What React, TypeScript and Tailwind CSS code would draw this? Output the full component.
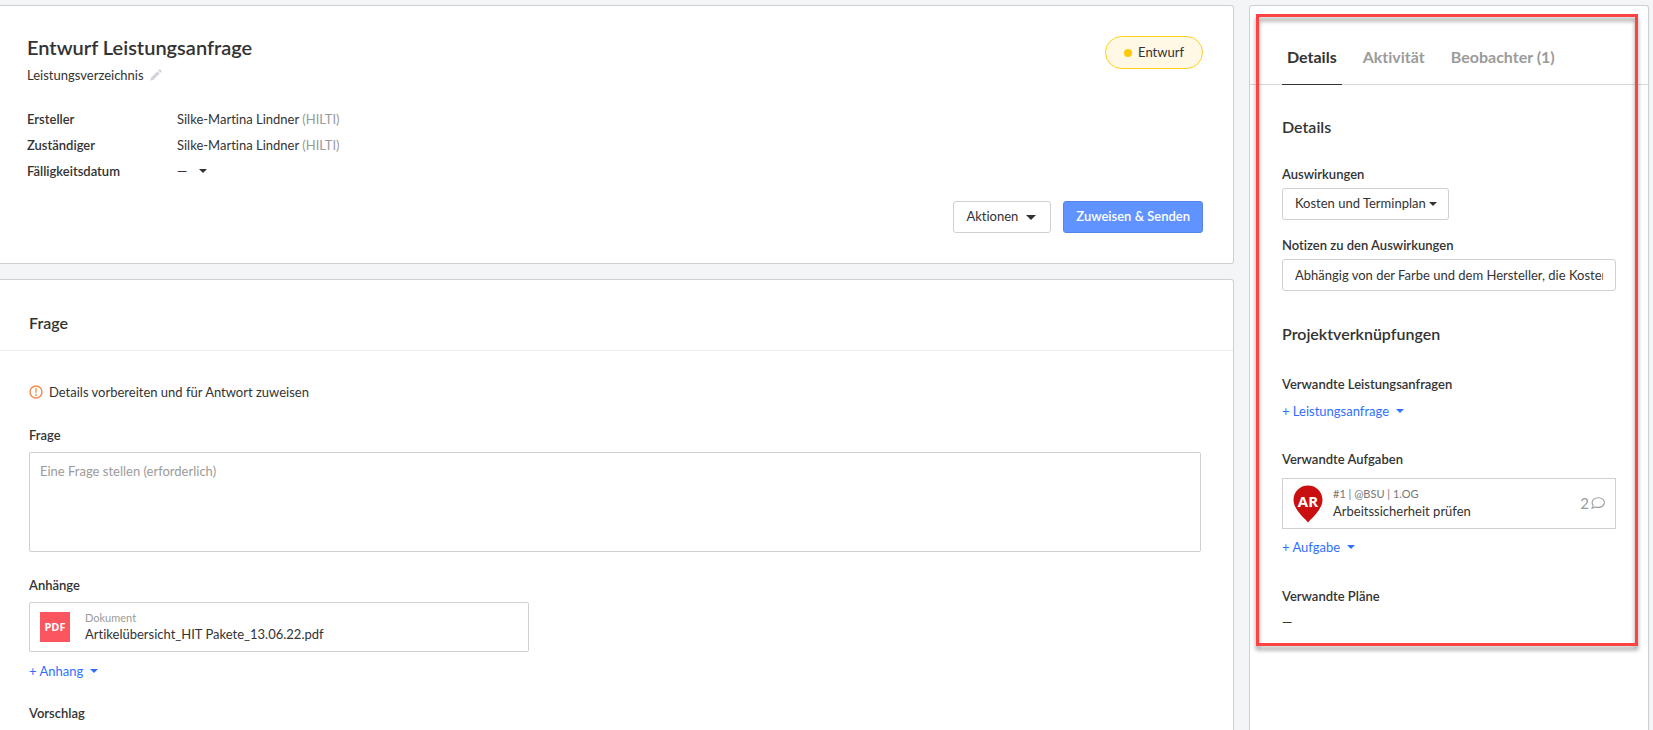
import { useState, type ReactNode } from "react";

function Caret({ className = "w-2 h-1" }: { className?: string }) {
  return (
    <svg viewBox="0 0 8 4" preserveAspectRatio="none" className={className} aria-hidden="true">
      <path d="M0 0h8L4 4z" fill="currentColor" />
    </svg>
  );
}

function PencilIcon() {
  return (
    <svg viewBox="0 0 12 12" className="size-3 text-[#d3d3da]" aria-hidden="true">
      <path d="M0.4 11.6l0.5-2.8 6.6-6.6 2.3 2.3-6.6 6.6zM8.2 1.5l0.9-0.9q0.6-0.5 1.2 0l1.1 1.1q0.5 0.6 0 1.2l-0.9 0.9z" fill="currentColor" />
    </svg>
  );
}

function AlertIcon() {
  return (
    <svg viewBox="0 0 14 14" className="size-3.5 text-[#f58a4b]" aria-hidden="true">
      <circle cx="7" cy="7" r="6" fill="none" stroke="currentColor" strokeWidth="1.4" />
      <path d="M6.2 3.2h1.6l-0.3 5h-1z" fill="currentColor" />
      <circle cx="7" cy="10" r="0.9" fill="currentColor" />
    </svg>
  );
}

function CommentIcon() {
  return (
    <svg viewBox="0 0 14 14" className="size-3.5" fill="none" stroke="currentColor" strokeWidth="1.1" strokeLinejoin="round" aria-hidden="true">
      <path d="M7.3 0.8c3.4 0 6.1 2.100 6.100 4.800s-2.700 4.800-6.100 4.800c-1 0-2-0.200-2.900-0.500-0.900 0.800-2 1.300-3.600 1.300 0.800-0.800 1.300-1.700 1.400-2.700C1.500 7.600 1.100 6.600 1.100 5.600 1.100 2.900 3.900 0.800 7.300 0.800z" />
    </svg>
  );
}

function TaskPin() {
  return (
    <svg viewBox="0 0 30 38" className="h-[38px] w-[30px] shrink-0" aria-hidden="true">
      <path d="M15 0.5C6.8 0.5 0.5 6.9 0.5 14.8c0 4.4 1.9 7.7 4.3 11.2C8 30.5 12 34 15 37.500c3-3.500 7-7 10.200-11.500 2.400-3.500 4.300-6.800 4.300-11.200C29.500 6.900 23.200 0.500 15 0.500z" fill="#c90f10" />
      <text x="15" y="21.5" textAnchor="middle" className="font-['Open_Sans',sans-serif] text-[15px] font-bold" fill="#fff">AR</text>
    </svg>
  );
}

function AddLink({ children, className }: { children: ReactNode; className: string }) {
  return (
    <button type="button" className={`flex items-center gap-[7px] leading-5 text-[#2f6fff] ${className}`}>
      {children}
      <Caret />
    </button>
  );
}

const people = [
  { role: "Ersteller", name: "Silke-Martina Lindner", company: "(HILTI)" },
  { role: "Zuständiger", name: "Silke-Martina Lindner", company: "(HILTI)" },
];

const tabs = ["Details", "Aktivität", "Beobachter (1)"];

function SummaryCard() {
  return (
    <section className="rounded-r-[3px] border-y border-r border-[#cfcfd4] bg-white pt-[27px] pr-[30px] pb-[30px] pl-[27px]">
      <div className="flex items-start justify-between">
        <div>
          <h1 className="text-xl leading-7 font-semibold">Entwurf Leistungsanfrage</h1>
          <div className="mt-1 flex items-center gap-1.5 leading-5">
            <span>Leistungsverzeichnis</span>
            <button type="button" aria-label="Bearbeiten"><PencilIcon /></button>
          </div>
        </div>
        <span className="mt-[3px] flex h-[33px] items-center gap-1.5 rounded-full border border-[#ffcf1a] bg-[#fff8e5] px-[18px]">
          <span className="size-2 rounded-full bg-[#ffc90e]" />
          Entwurf
        </span>
      </div>
      <dl className="mt-[21px] grid grid-cols-[150px_1fr] leading-[26px]">
        {people.map((p) => (
          <div key={p.role} className="contents">
            <dt className="font-semibold">{p.role}</dt>
            <dd>{p.name} <span className="text-[#9b9b9b]">{p.company}</span></dd>
          </div>
        ))}
        <dt className="font-semibold">Fälligkeitsdatum</dt>
        <dd>
          <button type="button" className="flex items-center gap-3">—<Caret /></button>
        </dd>
      </dl>
      <div className="mt-[17px] flex justify-end gap-3">
        <button type="button" className="flex h-8 items-center gap-2 rounded-[3px] border border-[#cfcfd4] pr-3.5 pl-3">
          Aktionen
          <Caret className="h-[5px] w-2.5" />
        </button>
        <button type="button" className="h-8 rounded-[3px] border border-[#5585e8] bg-[#6093ff] px-3 font-semibold text-white">
          Zuweisen &amp; Senden
        </button>
      </div>
    </section>
  );
}

function QuestionCard() {
  return (
    <section className="mt-[15px] rounded-r-[3px] border-y border-r border-[#cfcfd4] bg-white pb-8">
      <h2 className="border-b border-[#ececec] pt-[31px] pb-[15px] pl-[29px] text-base leading-6 font-semibold">Frage</h2>
      <div className="pr-8 pl-[29px]">
        <p className="mt-[31px] flex items-center gap-1.5 leading-5"><AlertIcon />Details vorbereiten und für Antwort zuweisen</p>
        <label htmlFor="question" className="mt-[23px] block leading-5 font-semibold">Frage</label>
        <textarea
          id="question"
          placeholder="Eine Frage stellen (erforderlich)"
          className="mt-[7px] block h-[100px] w-full resize-none rounded-xs border border-[#cfcfd4] px-2.5 py-2 leading-5 outline-none placeholder:text-[#9b9b9b]"
        />
        <h3 className="mt-[23px] leading-5 font-semibold">Anhänge</h3>
        <a href="#document" className="mt-[7px] flex h-[50px] w-full max-w-[500px] items-center gap-[15px] rounded-xs border border-[#cfcfd4] px-2.5">
          <span className="flex size-[30px] items-center justify-center bg-[#fb5660] font-['Open_Sans',sans-serif] text-[11px] font-bold text-white">PDF</span>
          <span className="flex flex-col pb-0.5">
            <span className="text-[11px] leading-4 text-[#9b9b9b]">Dokument</span>
            <span className="leading-4">Artikelübersicht_HIT Pakete_13.06.22.pdf</span>
          </span>
        </a>
        <AddLink className="mt-[9px]">+ Anhang</AddLink>
        <h3 className="mt-[22px] leading-5 font-semibold">Vorschlag</h3>
      </div>
    </section>
  );
}

function Sidebar() {
  const [active, setActive] = useState("Details");
  return (
    <aside className="relative w-[400px] shrink-0 rounded-t-[3px] border border-b-0 border-[#cfcfd4] bg-white">
      <nav role="tablist" className="flex gap-4 border-b border-[#d8d8d8] px-8 pt-[39px] text-base leading-6 font-bold">
        {tabs.map((tab) => (
          <button
            key={tab}
            type="button"
            role="tab"
            aria-selected={tab === active}
            onClick={() => setActive(tab)}
            className={
              tab === active
                ? "-mb-px border-b border-[#333] px-[5px] pb-[15px] text-[#333]"
                : "-mb-px border-b border-transparent px-[5px] pb-[15px] text-[#9b9b9b]"
            }
          >
            {tab}
          </button>
        ))}
      </nav>
      <div className="px-8">
        <h2 className="mt-[30px] text-base leading-6 font-semibold">Details</h2>
        <label htmlFor="impact" className="mt-[25px] block leading-5 font-semibold">Auswirkungen</label>
        <div className="relative mt-1 w-fit">
          <select id="impact" className="block h-8 appearance-none rounded-[3px] border border-[#cfcfd4] bg-white pr-[21px] pl-3 outline-none">
            <option>Kosten und Terminplan</option>
          </select>
          <span className="pointer-events-none absolute inset-y-0 right-3 flex items-center"><Caret /></span>
        </div>
        <label htmlFor="notes" className="mt-[15px] block leading-5 font-semibold">Notizen zu den Auswirkungen</label>
        <input
          id="notes"
          type="text"
          defaultValue="Abhängig von der Farbe und dem Hersteller, die Kosten können variieren"
          className="mt-1 block h-8 w-full rounded-[3px] border border-[#cfcfd4] px-3 outline-none"
        />
        <h2 className="mt-[31px] text-base leading-6 font-semibold">Projektverknüpfungen</h2>
        <h3 className="mt-7 leading-5 font-semibold">Verwandte Leistungsanfragen</h3>
        <AddLink className="mt-[7px]">+ Leistungsanfrage</AddLink>
        <h3 className="mt-7 leading-5 font-semibold">Verwandte Aufgaben</h3>
        <a href="#task" className="mt-[9px] flex h-[51px] items-center gap-2.5 border border-[#cfcfd4] px-2.5">
          <TaskPin />
          <span className="flex grow flex-col pb-0.5">
            <span className="text-[11px] leading-4 text-[#777]">#1 | @BSU | 1.OG</span>
            <span className="leading-[18px]">Arbeitssicherheit prüfen</span>
          </span>
          <span className="flex items-center gap-0.5 text-[15px] text-[#9b9b9b]">2<CommentIcon /></span>
        </a>
        <AddLink className="mt-2">+ Aufgabe</AddLink>
        <h3 className="mt-[29px] leading-5 font-semibold">Verwandte Pläne</h3>
        <p className="mt-1.5 leading-5">—</p>
      </div>
      <div className="pointer-events-none absolute top-2 right-2.5 left-1.5 h-[632px] border-3 border-[#ff4343] drop-shadow-[0_4px_2px_rgba(0,0,0,0.4)]" />
    </aside>
  );
}

export default function App() {
  return (
    <div className="flex h-screen gap-[15px] overflow-hidden bg-[#f4f5f7] pt-[5px] pr-1 font-[Lato,sans-serif] text-[13px] text-[#333] [font-variant-ligatures:none]">
      <main className="min-w-0 grow">
        <SummaryCard />
        <QuestionCard />
      </main>
      <Sidebar />
    </div>
  );
}
